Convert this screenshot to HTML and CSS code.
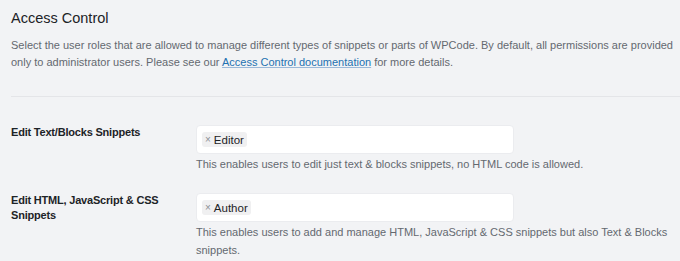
FILE: index.html
```html
<!DOCTYPE html>
<html>
<head>
<meta charset="utf-8">
<link rel="stylesheet" href="styles.css">
</head>
<body>
<div class="page">
  <h2 class="title">Access Control</h2>
  <p class="intro">Select the user roles that are allowed to manage different types of snippets or parts of WPCode. By default, all permissions are provided only to administrator users. Please see our <a href="#">Access Control documentation</a> for more details.</p>
  <hr class="sep">
  <div class="row">
    <div class="label">Edit Text/Blocks Snippets</div>
    <div class="field">
      <div class="select"><span class="tag"><span class="x">×</span>Editor</span></div>
      <p class="help">This enables users to edit just text &amp; blocks snippets, no HTML code is allowed.</p>
    </div>
  </div>
  <div class="row">
    <div class="label">Edit HTML, JavaScript &amp; CSS Snippets</div>
    <div class="field">
      <div class="select"><span class="tag"><span class="x">×</span>Author</span></div>
      <p class="help">This enables users to add and manage HTML, JavaScript &amp; CSS snippets but also Text &amp; Blocks snippets.</p>
    </div>
  </div>
</div>
</body>
</html>
```
FILE: styles.css
```css
html, body {
  margin: 0;
  padding: 0;
  background: #f2f3f5;
}
body {
  font-family: "Liberation Sans", Arial, sans-serif;
  color: #1d2327;
}
.page {
  padding: 0 0 0 11px;
}
.title {
  margin: 0;
  padding-top: 7px;
  font-size: 14.5px;
  font-weight: 400;
  line-height: 22px;
  color: #1d2327;
}
.intro {
  margin: 8px 0 0;
  max-width: 662px;
  font-size: 11px;
  line-height: 17px;
  color: #646970;
}
.intro a {
  color: #2271b1;
  text-decoration: underline;
  text-decoration-color: #9ab8d8;
}
.sep {
  margin: 25px 0 0;
  border: 0;
  border-top: 1px solid #e4e5e8;
  height: 0;
}
.row {
  display: flex;
  margin-top: 28px;
}
.row + .row {
  margin-top: 20px;
}
.label {
  width: 185px;
  flex: none;
  font-size: 11px;
  font-weight: 700;
  line-height: 15px;
  letter-spacing: -0.2px;
  padding-right: 10px;
  box-sizing: border-box;
  color: #1d2327;
}
.field {
  width: 318px;
}
.select {
  height: 29px;
  background: #fff;
  border: 1px solid #ebecef;
  border-radius: 4px;
  box-sizing: border-box;
  display: flex;
  align-items: center;
  padding-left: 5px;
}
.tag {
  display: inline-flex;
  align-items: center;
  background: #f0f0f1;
  border-radius: 3px;
  height: 15px;
  padding: 0 3px 0 3px;
  font-size: 11.5px;
  color: #1d2327;
}
.x {
  color: #8c8f94;
  font-size: 10px;
  margin-right: 3px;
}
.help {
  margin: 1px 0 0;
  width: 480px;
  font-size: 11px;
  line-height: 18px;
  color: #646970;
}
```
